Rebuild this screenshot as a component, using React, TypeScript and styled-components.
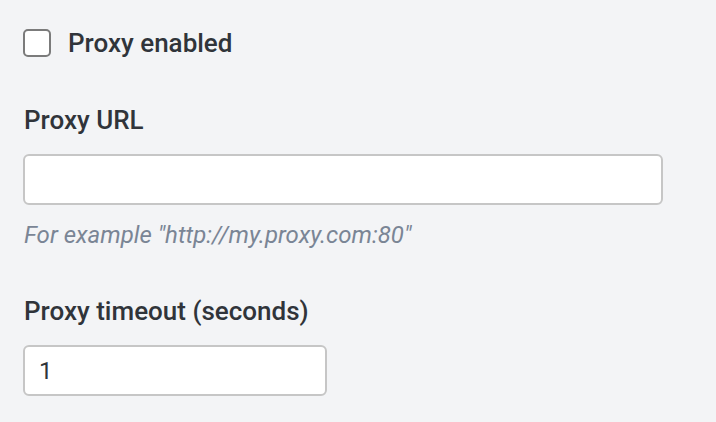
import styled, { createGlobalStyle } from "styled-components";

const GlobalStyle = createGlobalStyle`
  html, body {
    margin: 0;
    padding: 0;
    background: #f3f4f6;
  }
  body {
    font-family: Roboto, "Liberation Sans", sans-serif;
    color: #30343a;
  }
`;

const StyledForm = styled.form`
  display: flex;
  flex-direction: column;
  padding: 28px 23px 0;
`;

const StyledCheckboxRow = styled.label`
  display: flex;
  align-items: center;
  gap: 17px;
  font-size: 26px;
  font-weight: 500;
  line-height: 30px;
  cursor: pointer;
`;

const StyledCheckbox = styled.input.attrs({ type: "checkbox" })`
  appearance: none;
  margin: 0;
  width: 28px;
  height: 28px;
  border: 2px solid #7b7b7b;
  border-radius: 5px;
  background: #fff;
  box-sizing: border-box;
`;

const StyledField = styled.div<{ $top: number }>`
  display: flex;
  flex-direction: column;
  margin-top: ${(p) => p.$top}px;
`;

const StyledLabel = styled.label`
  font-size: 26px;
  font-weight: 500;
  line-height: 30px;
  margin-bottom: 19px;
  padding-left: 1px;
`;

const StyledInput = styled.input<{ $width: number }>`
  width: ${(p) => p.$width}px;
  height: 51px;
  box-sizing: border-box;
  border: 2px solid #c6c6c6;
  border-radius: 6px;
  background: #fff;
  padding: 0 14px;
  font-family: Roboto, "Liberation Sans", sans-serif;
  font-size: 24px;
  color: #30343a;
  outline: none;
`;

const StyledHint = styled.div`
  margin-top: 16px;
  padding-left: 1px;
  font-size: 24px;
  font-style: italic;
  line-height: 28px;
  color: #7a8595;
`;

export default function App() {
  return (
    <>
      <GlobalStyle />
      <StyledForm>
        <StyledCheckboxRow>
          <StyledCheckbox />
          Proxy enabled
        </StyledCheckboxRow>

        <StyledField $top={47}>
          <StyledLabel>Proxy URL</StyledLabel>
          <StyledInput $width={640} defaultValue="" />
          <StyledHint>For example "http://my.proxy.com:80"</StyledHint>
        </StyledField>

        <StyledField $top={47}>
          <StyledLabel>Proxy timeout (seconds)</StyledLabel>
          <StyledInput $width={304} defaultValue="1" />
        </StyledField>
      </StyledForm>
    </>
  );
}
